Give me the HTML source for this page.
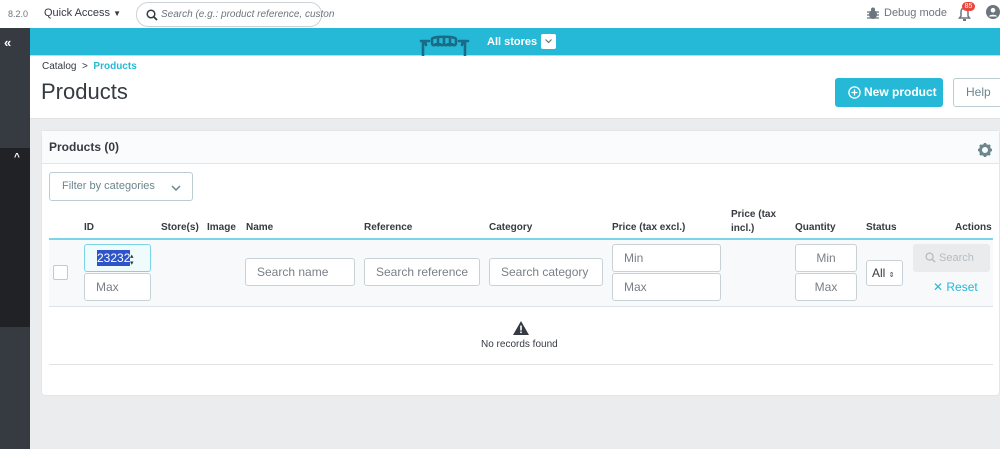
<!DOCTYPE html>
<html><head><meta charset="utf-8"><style>
*{box-sizing:border-box;margin:0;padding:0}
body{width:1000px;height:449px;overflow:hidden;font-family:"Liberation Sans",sans-serif;background:#eaecee;position:relative;color:#363a41;font-size:11px}
.abs{position:absolute}
.top{left:0;top:0;width:1000px;height:28px;background:#fff}
.side{left:0;top:28px;width:30px;height:421px;background:#363a41}
.bar{left:30px;top:28px;width:970px;height:28px;background:#25b9d7;border-bottom:1px solid #a8e3ef}
.head{left:30px;top:56px;width:970px;height:63px;background:#fff;border-bottom:1px solid #dfe3e6}
.card{left:42px;top:131px;width:957px;height:264px;background:#fff;box-shadow:0 0 0 1px #e3e6e8;border-radius:3px}
.inp{position:absolute;background:#fff;border:1px solid #c8d1d6;border-radius:3px;color:#7a8087;font-size:12px;padding-left:11px;line-height:26px;height:28px}
.th{position:absolute;font-weight:bold;font-size:10px;color:#363a41}
</style></head><body>
<div class="abs top">
 <div class="abs" style="left:8px;top:9px;font-size:9px;color:#6c757d">8.2.0</div>
 <div class="abs" style="left:44px;top:7px;font-size:11px;color:#363a41">Quick Access <span style="font-size:8px">▼</span></div>
 <div class="abs" style="left:136px;top:2px;width:186px;height:25px;border:1px solid #cdd3d7;border-radius:12px">
  <svg class="abs" style="left:9px;top:6px" width="12" height="12" viewBox="0 0 12 12"><circle cx="5" cy="5" r="3.8" fill="none" stroke="#363a41" stroke-width="1.5"/><line x1="8" y1="8" x2="11" y2="11" stroke="#363a41" stroke-width="1.8"/></svg>
  <div class="abs" style="left:24px;top:6px;font-size:10px;font-style:italic;color:#6c757d;white-space:nowrap">Search (e.g.: product reference, custon</div>
 </div>
 <svg class="abs" style="left:867px;top:7px" width="12" height="13" viewBox="0 0 12 13"><ellipse cx="6" cy="7.5" rx="4" ry="4.5" fill="#6c757d"/><circle cx="6" cy="2.5" r="2" fill="#6c757d"/><path d="M0 5h12M0 8h12M0 11h12" stroke="#6c757d" stroke-width="1.2"/></svg>
 <div class="abs" style="left:884px;top:7px;font-size:11px;color:#6c757d">Debug mode</div>
 <svg class="abs" style="left:958px;top:7px" width="13" height="14" viewBox="0 0 13 14"><path d="M6.5 1C4 1 3 3 3 5v4L1.5 11h10L10 9V5c0-2-1-4-3.5-4z" fill="none" stroke="#6c757d" stroke-width="1.5"/><rect x="5" y="12" width="3" height="2" fill="#6c757d"/></svg>
 <div class="abs" style="left:962px;top:2px;width:13px;height:9px;border-radius:5px;background:#e9453b;color:#fff;font-size:7px;text-align:center;line-height:9px">85</div>
 <svg class="abs" style="left:986px;top:5px" width="14" height="14" viewBox="0 0 14 14"><circle cx="7" cy="7" r="7" fill="#6c757d"/><circle cx="7" cy="5.2" r="2.3" fill="#fff"/><path d="M2.8 11.5c1-2.3 7.4-2.3 8.4 0" fill="#fff"/></svg>
</div>
<div class="abs side"></div>
<div class="abs" style="left:0;top:148px;width:30px;height:179px;background:#202226"></div>
<div class="abs" style="left:4px;top:35px;color:#fff;font-size:13px;font-weight:bold">«</div>
<div class="abs" style="left:14px;top:152px;color:#fff;font-size:10px;font-weight:bold">^</div>
<div class="abs bar">
 <svg class="abs" style="left:388px;top:5px" width="56" height="23" viewBox="0 0 56 23"><g fill="none" stroke="#1a6b85" stroke-width="2.6" stroke-linecap="round"><path d="M3 8h8M5 8v15M7 8l1 4"/><path d="M14 6c0-3 24-3 24 0v4c0 3-4 3-4 0c0 3-4 3-4 0c0 3-4 3-4 0c0 3-4 3-4 0c0 3-4 3-4 0c0 3-4 3-4 0z"/><path d="M20 4v6M26 4v6M32 4v6"/><path d="M41 8h9M47 8v15M45 8l-1 4"/></g></svg>
 <div class="abs" style="left:457px;top:8px;color:#fff;font-weight:bold;font-size:11px">All stores</div>
 <div class="abs" style="left:511px;top:6px;width:15px;height:15px;background:#fff;border-radius:2px">
  <svg class="abs" style="left:4px;top:5px" width="7" height="5" viewBox="0 0 7 5"><path d="M0.5 0.5l3 3 3-3" fill="none" stroke="#6c757d" stroke-width="1.2"/></svg></div>
</div>
<div class="abs head">
 <div class="abs" style="left:12px;top:5px;font-size:10px;color:#363a41">Catalog &nbsp;&gt;&nbsp; <span style="color:#25b9d7;font-weight:bold">Products</span></div>
 <div class="abs" style="left:11px;top:23px;font-size:22px;color:#363a41">Products</div>
 <div class="abs" style="left:805px;top:22px;width:108px;height:29px;background:#25b9d7;border-radius:3px;color:#fff;font-weight:bold;font-size:12px;line-height:29px;padding-left:13px">
  <svg style="vertical-align:-3px;margin-right:3px" width="13" height="13" viewBox="0 0 13 13"><circle cx="6.5" cy="6.5" r="5.6" fill="none" stroke="#fff" stroke-width="1.3"/><path d="M6.5 3.5v6M3.5 6.5h6" stroke="#fff" stroke-width="1.3"/></svg>New product</div>
 <div class="abs" style="left:923px;top:22px;width:50px;height:29px;border:1px solid #bbcdd2;border-radius:3px;color:#6c868e;font-size:12px;line-height:27px;padding-left:12px">Help</div>
</div>
<div class="abs card">
 <div class="abs" style="left:0;top:0;width:957px;height:33px;background:#fafbfc;border-bottom:1px solid #e3e6e8"></div>
 <div class="abs" style="left:7px;top:9px;font-weight:bold;font-size:12px">Products (0)</div>
 <svg class="abs" style="left:936px;top:12px" width="14" height="14" viewBox="0 0 14 14"><circle cx="7" cy="7" r="4.5" fill="none" stroke="#6c868e" stroke-width="3"/><g stroke="#6c868e" stroke-width="2.5"><path d="M7 0v3M7 11v3M0 7h3M11 7h3M2 2l2 2M10 10l2 2M12 2l-2 2M2 12l2-2"/></g></svg>
 <div class="abs" style="left:7px;top:41px;width:144px;height:29px;border:1px solid #bbcdd2;border-radius:3px;color:#6c868e;font-size:11px;line-height:27px;padding-left:12px">Filter by categories
  <svg class="abs" style="left:121px;top:12px" width="10" height="6" viewBox="0 0 10 6"><path d="M1 1l4 4 4-4" fill="none" stroke="#6c868e" stroke-width="1.5"/></svg></div>
 <div class="th" style="left:42px;top:91px">ID</div>
 <div class="th" style="left:119px;top:91px">Store(s)</div>
 <div class="th" style="left:165px;top:91px">Image</div>
 <div class="th" style="left:204px;top:91px">Name</div>
 <div class="th" style="left:322px;top:91px">Reference</div>
 <div class="th" style="left:447px;top:91px">Category</div>
 <div class="th" style="left:570px;top:91px">Price (tax excl.)</div>
 <div class="th" style="left:689px;top:77px;line-height:14px">Price (tax<br>incl.)</div>
 <div class="th" style="left:753px;top:91px">Quantity</div>
 <div class="th" style="left:824px;top:91px">Status</div>
 <div class="th" style="left:913px;top:91px">Actions</div>
 <div class="abs" style="left:7px;top:107px;width:944px;height:69px;background:#f7f9fa;border-top:2px solid #7cd5e7;border-bottom:1px solid #dfe3e6"></div>
 <div class="abs" style="left:11px;top:134px;width:15px;height:15px;border:1px solid #bbcdd2;border-radius:2px;background:#fff"></div>
 <div class="inp" style="left:42px;top:113px;width:67px;border-color:#7cd5e7;background:#f0fbfd;color:#fff;padding-left:12px"><span style="background:#2d55c9;padding:1px 0">23232</span><span style="position:absolute;left:45px;top:8px;color:#363a41;font-size:7px;line-height:7px">▴<br>▾</span></div>
 <div class="inp" style="left:42px;top:142px;width:67px">Max</div>
 <div class="inp" style="left:203px;top:127px;width:110px">Search name</div>
 <div class="inp" style="left:322px;top:127px;width:116px">Search reference</div>
 <div class="inp" style="left:447px;top:127px;width:114px">Search category</div>
 <div class="inp" style="left:570px;top:113px;width:109px">Min</div>
 <div class="inp" style="left:570px;top:142px;width:109px">Max</div>
 <div class="inp" style="left:753px;top:113px;width:62px;text-align:center;padding:0">Min</div>
 <div class="inp" style="left:753px;top:142px;width:62px;text-align:center;padding:0">Max</div>
 <div class="inp" style="left:824px;top:129px;width:37px;height:26px;line-height:24px;padding-left:5px;color:#363a41">All <span style="font-size:7px">⇕</span></div>
 <div class="abs" style="left:871px;top:113px;width:77px;height:28px;background:#eaebec;border-radius:3px;color:#b5bcc2;font-size:11px;line-height:28px;padding-left:12px">
  <svg style="vertical-align:-2px" width="11" height="11" viewBox="0 0 12 12"><circle cx="5" cy="5" r="3.8" fill="none" stroke="#b5bcc2" stroke-width="1.4"/><line x1="8" y1="8" x2="11" y2="11" stroke="#b5bcc2" stroke-width="1.6"/></svg> Search</div>
 <div class="abs" style="left:891px;top:149px;color:#25b9d7;font-size:12px">✕ Reset</div>
 <svg class="abs" style="left:471px;top:190px" width="16" height="14" viewBox="0 0 16 14"><path d="M8 0L16 14H0z" fill="#363a41"/><rect x="7.2" y="4.5" width="1.6" height="5" fill="#fff"/><rect x="7.2" y="10.5" width="1.6" height="1.6" fill="#fff"/></svg>
 <div class="abs" style="left:439px;top:208px;font-size:10px;color:#363a41">No records found</div>
 <div class="abs" style="left:7px;top:233px;width:944px;height:1px;background:#dfe3e6"></div>
</div>
</body></html>
